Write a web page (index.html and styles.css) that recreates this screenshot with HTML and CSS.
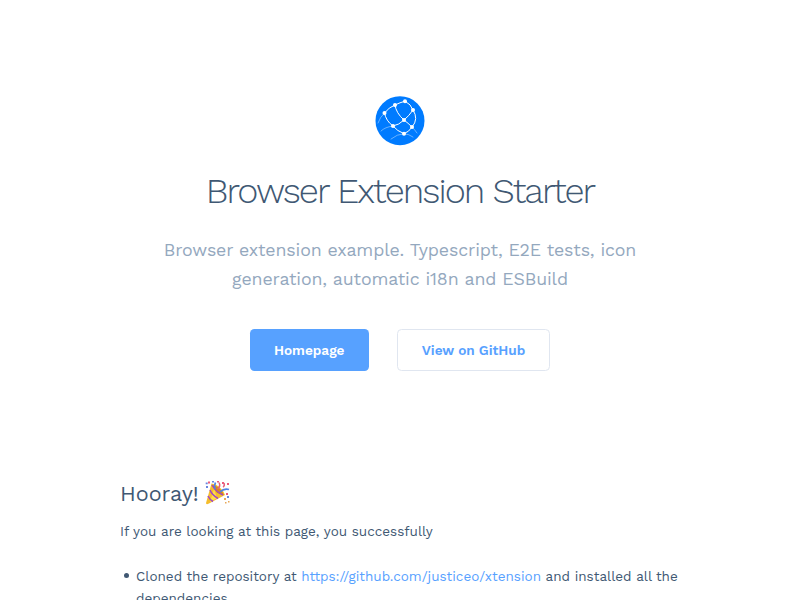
FILE: index.html
```html
<!DOCTYPE html>
<html lang="en">
<head>
<meta charset="utf-8">
<title>Browser Extension Starter</title>
<link rel="stylesheet" href="styles.css">
</head>
<body>
<header class="hero">
  <svg class="logo" viewBox="0 0 50 50" aria-hidden="true">
    <circle cx="25" cy="24.700" r="24.500" fill="#007bff"/>
    <g fill="none" stroke="#fff" stroke-width="1" stroke-linecap="round">
      <path d="M9.500 17Q14 11 20 9Q25 6.500 30 5.200Q36 8 38 14"/>
      <path d="M9.500 17Q11 25 18 30Q22 35 29 37.700"/>
      <path d="M20 9Q21 17 29 24Q33 27 37 31"/>
      <path d="M38 14Q34 20 29 24Q24 29 18 30"/>
      <path d="M38 14Q44 23 37 31Q34 36 29 37.700"/>
      <path d="M9.500 17Q5 21 3 27M18 30Q10 31 6 35M29 37.700Q22 38 16 43M37 31Q40 34 42 37M29 37.700Q34 38 38 41" stroke-opacity=".4"/>
    </g>
    <g fill="#fff"><circle cx="9.500" cy="17" r="2"/><circle cx="20" cy="9" r="2"/><circle cx="30" cy="5.200" r="2"/><circle cx="38" cy="14" r="2"/><circle cx="29" cy="24" r="2"/><circle cx="18" cy="30" r="2"/><circle cx="37" cy="31" r="2"/><circle cx="29" cy="37.700" r="2"/></g>
  </svg>
  <h1 class="title">Browser Extension Starter</h1>
  <p class="tagline">Browser extension example. Typescript, E2E tests, icon<br>generation, automatic i18n and ESBuild</p>
  <nav class="actions">
    <a class="button primary">Homepage</a>
    <a class="button secondary">View on GitHub</a>
  </nav>
</header>
<main class="content">
  <h2 class="heading">Hooray!
    <svg class="emoji" viewBox="0 0 25 24" aria-hidden="true">
      <path d="M6.500 2.500L1 22Q1 24 4 22.500L20 14Q16 4 6.500 2.500Z" fill="#f5bd2c"/>
      <path d="M7 4L12 12L19 14Q15 5 7 4Z" fill="#d58a1c"/>
      <path d="M9 8L5 21L12 17Z" fill="#ffdd4b"/>
      <path d="M5 9Q7 14 13 17.500M3 15Q5 19 8 20.500M7 4Q11 11 18 14" fill="none" stroke="#a046c6" stroke-width="1.500"/>
      <path d="M10 8Q9 4 10.500 1.500M15 11Q19 7 24 8.500" fill="none" stroke="#4f83e6" stroke-width="1.700"/>
      <path d="M12.500 8Q16 5 14 1.500M18 6Q20 5 19 2" fill="none" stroke="#e5607d" stroke-width="1.500"/>
      <g fill="#ec5b7b"><path d="M3 .5h2v2H3zM17 1h2v2h-2zM22 2h2v2h-2zM21 12h2v2h-2zM12 0h2v1.500h-2z"/></g>
      <g fill="#6886df"><path d="M.7 1.500h2v1.800h-2zM1 5h2v2H1zM7 0h2v1.500H7zM22 15h2v2h-2z"/></g>
      <g fill="#e7a95a"><path d="M19 17h2v2h-2zM23 20h1.500v1.500H23zM20 21h1.500v1.500H20z"/></g>
    </svg>
  </h2>
  <p class="intro">If you are looking at this page, you successfully</p>
  <ul class="steps">
    <li>Cloned the repository at <a class="link">https://github.com/justiceo/xtension</a> and installed all the dependencies</li>
  </ul>
</main>
</body>
</html>
```
FILE: styles.css
```css
* { box-sizing: border-box; }
html { overflow: hidden; }
body {
  margin: 0;
  height: 600px;
  overflow: hidden;
  background: #fff;
  color: #405873;
  font: 13.5px/22px "Work Sans", Inter, sans-serif;
}
.hero {
  display: flex;
  flex-direction: column;
  align-items: center;
  padding-top: 96px;
  text-align: center;
}
.logo { width: 50px; height: 50px; }
.title {
  margin: 20px 0 0;
  font-size: 36px;
  line-height: 50px;
  font-weight: 300;
  letter-spacing: -2px;
  white-space: nowrap;
}
.tagline {
  margin: 19px 0 0;
  color: #94a8be;
  font-size: 17.800px;
  line-height: 29px;
  font-weight: 400;
  letter-spacing: -.135px;
  white-space: nowrap;
}
.actions { display: flex; gap: 28.500px; margin-top: 36px; }
.button {
  display: flex;
  align-items: center;
  justify-content: center;
  height: 42px;
  border-radius: 4.500px;
  font-size: 13.6px;
  font-weight: 600;
}
.primary { width: 118.500px; background: #57a1ff; color: #fff; }
.secondary { width: 153px; border: 1px solid #e0e6f0; color: #57a1ff; }
.content { width: 560px; margin: 108px auto 0; }
.heading {
  display: flex;
  gap: 6px;
  margin: 0;
  font-size: 21.6px;
  line-height: 30px;
  font-weight: 400;
}
.emoji { width: 25px; height: 24px; margin-top: 2px; }
.intro { margin: 11px 0 0; }
.steps { margin: 23px 0 0; padding-left: 16px; list-style: none; }
.steps li::before {
  content: "";
  float: left;
  width: 5px;
  height: 5px;
  margin: 8px 0 0 -12px;
  border-radius: 50%;
  background: #405873;
}
.link { color: #57a1ff; }
```
